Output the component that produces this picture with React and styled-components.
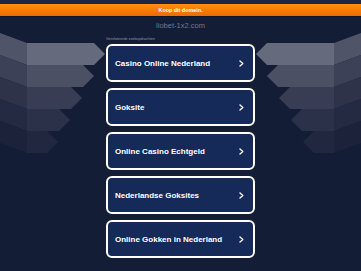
import React from 'react';
import styled, { createGlobalStyle } from 'styled-components';

const Global = createGlobalStyle`
  html, body { margin: 0; padding: 0; background: #141d36; }
  body { font-family: 'Liberation Sans', Arial, sans-serif; }
`;

const Page = styled.div`
  width: 361px;
  height: 271px;
  overflow: hidden;
  background: #141d36;
`;

const TopStrip = styled.div`
  height: 4px;
  background: #1d2742;
`;

const BuyBar = styled.div`
  height: 12px;
  background: linear-gradient(#ff8f0a, #ee6a00);
  color: #fff;
  font-size: 5.4px;
  font-weight: 700;
  display: flex;
  align-items: center;
  justify-content: center;
  border-bottom: 1px solid #0f1628;
`;

const Domain = styled.div`
  height: 16px;
  display: flex;
  align-items: center;
  justify-content: center;
  color: #6f7991;
  font-size: 7.5px;
`;

const Stage = styled.div`
  display: grid;
  grid-template-columns: 106px 149px 106px;
`;

const Deco = styled.svg`
  display: block;
  transform: ${p => (p.$flip ? 'scaleX(-1)' : 'none')};
`;

const Center = styled.div`
  display: flex;
  flex-direction: column;
`;

const Label = styled.div`
  height: 11px;
  display: flex;
  align-items: center;
  color: #8d97ad;
  font-size: 3.7px;
`;

const List = styled.div`
  display: flex;
  flex-direction: column;
  gap: 6px;
`;

const Item = styled.div`
  height: 38px;
  box-sizing: border-box;
  border: 2px solid #fff;
  border-radius: 6px;
  background: #152a59;
  display: flex;
  align-items: center;
  justify-content: space-between;
  padding: 0 9px 0 7px;
  color: #fff;
  font-size: 8px;
  font-weight: 700;
`;

const tips = [105, 94, 82, 70, 58];
const fronts = ['#656a7c', '#4b5064', '#383d53', '#2b3149', '#20273f'];
const sides = ['#4f5468', '#3c4157', '#2e3349', '#242a42', '#1b2239'];

function Arrows({ flip }) {
  return (
    <Deco $flip={flip} width="106" height="140" viewBox="0 0 106 140">
      {tips.map((tip, i) => {
        const top = 10 + 22 * i;
        const bot = top + 22;
        const base = tip - 11;
        return (
          <g key={i}>
            <polygon points={`0,${top - 10} 27,${top} 27,${bot} 0,${bot - 10}`} fill={sides[i]} />
            <polygon points={`27,${top} ${base},${top} ${tip},${top + 11} ${base},${bot} 27,${bot}`} fill={fronts[i]} />
          </g>
        );
      })}
    </Deco>
  );
}

function Chevron() {
  return (
    <svg width="5" height="7" viewBox="0 0 5 7">
      <polyline points="1,1 3.8,3.5 1,6" fill="none" stroke="#fff" strokeWidth="1.4" strokeLinecap="round" strokeLinejoin="round" />
    </svg>
  );
}

const items = [
  'Casino Online Nederland',
  'Goksite',
  'Online Casino Echtgeld',
  'Nederlandse Goksites',
  'Online Gokken in Nederland',
];

export default function App() {
  return (
    <Page>
      <Global />
      <TopStrip />
      <BuyBar>Koop dit domein.</BuyBar>
      <Domain>liobet-1x2.com</Domain>
      <Stage>
        <Arrows />
        <Center>
          <Label>Gerelateerde zoekopdrachten</Label>
          <List>
            {items.map(t => (
              <Item key={t}>
                <span>{t}</span>
                <Chevron />
              </Item>
            ))}
          </List>
        </Center>
        <Arrows flip />
      </Stage>
    </Page>
  );
}
